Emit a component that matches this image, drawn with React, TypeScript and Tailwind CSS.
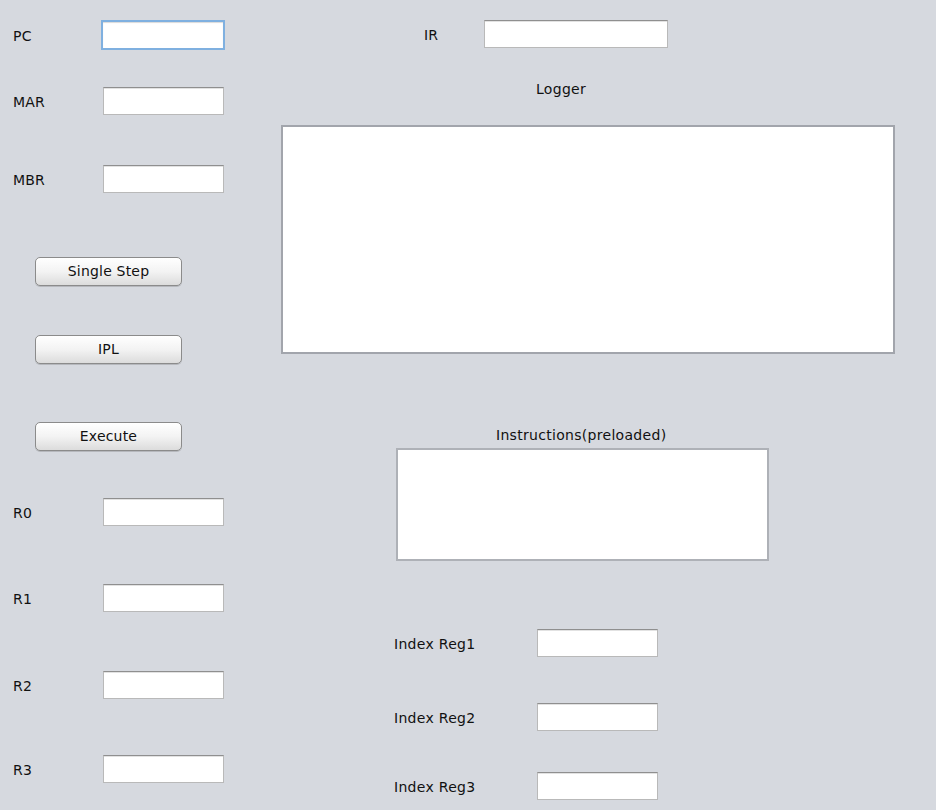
const font = { fontFamily: '"DejaVu Sans", "Liberation Sans", sans-serif' };

const Field = ({ w = "w-[121px]", focused = false }: { w?: string; focused?: boolean }) => (
  <input
    className={
      focused
        ? `${w} h-[30px] bg-white border-2 border-[#7fb0e0] outline-none shadow-[inset_0_1px_1px_rgba(0,0,0,0.15)]`
        : `${w} h-[28px] bg-white border border-[#b9b9b9] border-t-[#8f8f8f] outline-none shadow-[inset_0_1px_0_#e2e2e2]`
    }
  />
);

const Btn = ({ label, className = "" }: { label: string; className?: string }) => (
  <button
    className={`ml-[35px] w-[147px] h-[29px] rounded-[5px] border border-[#8b8b8b] bg-gradient-to-b from-white via-[#f3f3f3] to-[#dcdcdc] text-[14px] tracking-[0.2px] text-[#111] shadow-[0_1px_0_rgba(0,0,0,0.15)] ${className}`}
  >
    {label}
  </button>
);

const Row = ({ label, className = "", focused = false }: { label: string; className?: string; focused?: boolean }) => (
  <div className={`flex items-center ${className}`}>
    <span className={`${focused ? "w-[101px]" : "w-[103px]"} pl-[13px] pt-[2px] text-[14px] tracking-[0.2px] text-[#111]`}>{label}</span>
    <Field focused={focused} w={focused ? "w-[124px]" : "w-[121px]"} />
  </div>
);

const IndexRow = ({ label, className = "" }: { label: string; className?: string }) => (
  <div className={`flex items-center ml-[113px] ${className}`}>
    <span className="w-[143px] pt-[3px] text-[14px] tracking-[0.3px] text-[#111]">{label}</span>
    <Field />
  </div>
);

export default function App() {
  return (
    <div className="w-[936px] h-[810px] bg-[#d6d9df] flex overflow-hidden" style={font}>
      {/* left: registers + controls */}
      <div className="w-[281px] flex flex-col pt-[20px]">
        <Row label="PC" focused />
        <Row label="MAR" className="mt-[37px]" />
        <Row label="MBR" className="mt-[50px]" />
        <Btn label="Single Step" className="mt-[64px]" />
        <Btn label="IPL" className="mt-[49px] h-[28px]" />
        <Btn label="Execute" className="mt-[58px] h-[28px]" />
        <Row label="R0" className="mt-[47px]" />
        <Row label="R1" className="mt-[58px]" />
        <Row label="R2" className="mt-[59px]" />
        <Row label="R3" className="mt-[56px]" />
      </div>

      {/* right: IR, logger, instructions, index regs */}
      <div className="flex-1 flex flex-col pt-[20px]">
        <div className="flex items-center ml-[143px]">
          <span className="w-[60px] pt-[2px] text-[14px] text-[#111]">IR</span>
          <Field w="w-[184px]" />
        </div>
        <div className="mt-[33px] pl-[255px] text-[14px] tracking-[0.3px] leading-[16px] text-[#111]">Logger</div>
        <textarea className="mt-[28px] w-[614px] h-[229px] bg-white border-2 border-[#a2a5ac] outline-none resize-none" />
        <div className="mt-[73px] pl-[215px] text-[14px] tracking-[0.3px] leading-[16px] text-[#111]">Instructions(preloaded)</div>
        <textarea className="mt-[5px] ml-[115px] w-[373px] h-[113px] bg-white border-2 border-[#aeb1b7] outline-none resize-none" />
        <IndexRow label="Index Reg1" className="mt-[68px]" />
        <IndexRow label="Index Reg2" className="mt-[46px]" />
        <IndexRow label="Index Reg3" className="mt-[41px]" />
      </div>
    </div>
  );
}
